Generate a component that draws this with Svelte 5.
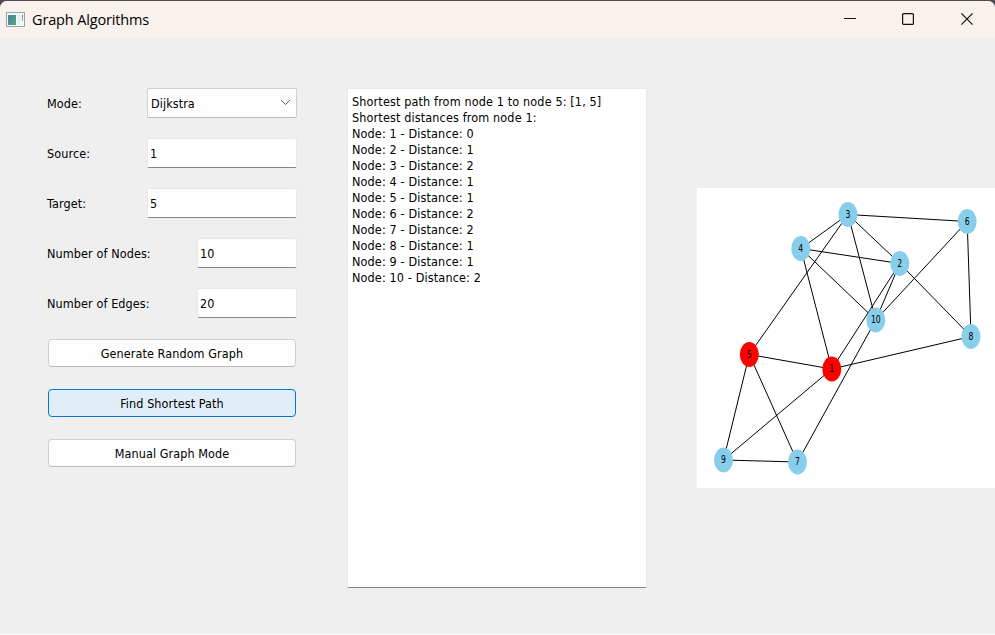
<script>
  let mode = $state('Dijkstra');
  let source = $state('1');
  let target = $state('5');
  let nodeCount = $state('10');
  let edgeCount = $state('20');

  const distances = [0, 1, 2, 1, 1, 2, 2, 1, 1, 2];
  const output = [
    'Shortest path from node 1 to node 5: [1, 5]',
    'Shortest distances from node 1:',
    ...distances.map((d, i) => `Node: ${i + 1} - Distance: ${d}`)
  ];

  const nodes = {
    1: [134.8, 181],
    2: [202.8, 75.5],
    3: [151, 26.5],
    4: [103.8, 60.5],
    5: [52.3, 166.5],
    6: [270.2, 33.5],
    7: [100.5, 274],
    8: [274, 148.5],
    9: [26.5, 272],
    10: [178.8, 132]
  };
  const edges = [
    [3, 4], [3, 6], [3, 2], [3, 10], [3, 5],
    [4, 2], [4, 10], [4, 1], [2, 10], [2, 1],
    [2, 8], [6, 10], [6, 8], [8, 1], [10, 7],
    [5, 1], [5, 9], [5, 7], [1, 9], [9, 7]
  ];
  const path = [1, 5];
</script>

<div class="desktop">
  <div class="window">
    <header>
      <svg class="app-icon" width="19" height="16" viewBox="0 0 19 16">
        <defs>
          <linearGradient id="pane" x1="0" y1="0" x2="1" y2="1">
            <stop offset="0" stop-color="#4581a4" />
            <stop offset="1" stop-color="#55a878" />
          </linearGradient>
          <linearGradient id="strip" x1="0" y1="0" x2="0" y2="1">
            <stop offset="0" stop-color="#4581a4" />
            <stop offset="1" stop-color="#7cc49a" />
          </linearGradient>
        </defs>
        <rect x="0.5" y="0.5" width="18" height="14" fill="#f5f7f8" stroke="#9aa3a8" />
        <rect x="2" y="3" width="8" height="10" fill="url(#pane)" />
        <rect x="11" y="3" width="4" height="10" fill="#e9eeee" />
        <rect x="16" y="3" width="1" height="6" fill="url(#strip)" />
      </svg>
      <h1>Graph Algorithms</h1>
      <div class="controls">
        <svg width="12" height="12" viewBox="0 0 12 12"><path d="M0 5.5H12" /></svg>
        <svg width="12" height="12" viewBox="0 0 12 12"><rect x="0.6" y="0.6" width="10.8" height="10.8" rx="1" /></svg>
        <svg width="12" height="12" viewBox="0 0 12 12"><path d="M0.4 0.4L11.6 11.6M11.6 0.4L0.4 11.6" /></svg>
      </div>
    </header>

    <main>
      <form>
        <div class="row">
          <label for="mode">Mode:</label>
          <button type="button" id="mode" class="combo">
            <span>{mode}</span>
            <svg width="11" height="7" viewBox="0 0 11 7"><path d="M1 1L5.5 5.5L10 1" /></svg>
          </button>
        </div>
        <div class="row">
          <label for="source">Source:</label>
          <input id="source" bind:value={source} />
        </div>
        <div class="row">
          <label for="target">Target:</label>
          <input id="target" bind:value={target} />
        </div>
        <div class="row">
          <label for="nodes">Number of Nodes:</label>
          <input id="nodes" class="short" bind:value={nodeCount} />
        </div>
        <div class="row">
          <label for="edges">Number of Edges:</label>
          <input id="edges" class="short" bind:value={edgeCount} />
        </div>
        <button type="button" class="push">Generate Random Graph</button>
        <button type="button" class="push hot">Find Shortest Path</button>
        <button type="button" class="push">Manual Graph Mode</button>
      </form>

      <section class="output">
        {#each output as line}
          <div><span>{line}</span></div>
        {/each}
      </section>

      <svg class="graph" width="298" height="300" viewBox="0 0 298 300">
        {#each edges as [a, b]}
          <line x1={nodes[a][0]} y1={nodes[a][1]} x2={nodes[b][0]} y2={nodes[b][1]} />
        {/each}
        {#each Object.entries(nodes) as [id, [x, y]]}
          <ellipse class:visited={path.includes(+id)} cx={x} cy={y} rx="9.5" ry="12.5" />
          <text transform="translate({x} {y + 3.2}) scale(0.76 1)">{id}</text>
        {/each}
      </svg>
    </main>
  </div>
</div>

<style>
  .desktop {
    width: 995px;
    height: 635px;
    box-sizing: border-box;
    padding: 1px 0;
    background: linear-gradient(#4c4b50 0 10px, #fff 10px);
    overflow: hidden;
    font-family: 'DejaVu Sans Condensed', 'DejaVu Sans', sans-serif;
    font-stretch: condensed;
    font-size: 12.5px;
    letter-spacing: 0.14px;
    color: #000;
  }
  .window {
    height: 633px;
    background: #efefef;
    border-radius: 7px 7px 0 0;
    overflow: hidden;
  }
  header {
    display: flex;
    align-items: center;
    height: 37px;
    padding-left: 6px;
    background: #f9f1ec;
  }
  h1 {
    flex: 1;
    margin: 0 0 0 7px;
    font: 400 14.5px/20px 'Open Sans', 'Noto Sans', sans-serif;
    letter-spacing: -0.15px;
  }
  .controls {
    display: flex;
    gap: 46px;
    padding: 0 22px 1px 0;
  }
  .controls svg {
    display: block;
    fill: none;
    stroke: #111;
    stroke-width: 1.2;
  }
  .controls svg:last-child {
    margin-left: 1px;
  }
  main {
    display: flex;
    align-items: flex-start;
    padding: 50px 0 0 47px;
  }
  form {
    display: flex;
    flex-direction: column;
    gap: 20px;
    width: 250px;
  }
  .row {
    display: flex;
    justify-content: space-between;
    align-items: center;
    height: 30px;
  }
  .row label {
    padding-top: 1px;
    letter-spacing: 0.1px;
  }
  .row input {
    box-sizing: border-box;
    width: 150px;
    height: 30px;
    margin: 0;
    padding: 0 2px;
    border: 1px solid #e8e8e8;
    border-bottom-color: #868686;
    border-radius: 2px;
    outline: 0;
    background: #fff;
    font: inherit;
    letter-spacing: inherit;
    color: inherit;
  }
  .row input.short {
    width: 100px;
  }
  button {
    font: inherit;
    letter-spacing: 0.08px;
    color: inherit;
  }
  .combo {
    display: flex;
    justify-content: space-between;
    align-items: center;
    box-sizing: border-box;
    width: 150px;
    height: 30px;
    padding: 1px 5px 0 3px;
    border: 1px solid #d0d0d0;
    border-bottom-color: #bababa;
    border-radius: 2px;
    background: #fdfdfd;
  }
  .combo svg {
    margin-bottom: 2px;
    fill: none;
    stroke: #5c5c5c;
  }
  .push {
    box-sizing: border-box;
    height: 28px;
    margin: 1px 1px;
    padding: 1px 0 0;
    border: 1px solid #d0d0d0;
    border-bottom-color: #bababa;
    border-radius: 4px;
    background: #fdfdfd;
  }
  .push.hot {
    border-color: #0078d4;
    background: #e0eef9;
  }
  .output {
    box-sizing: border-box;
    width: 300px;
    height: 500px;
    margin-left: 50px;
    padding: 5px 4px;
    border: 1px solid #e8e8e8;
    border-bottom-color: #868686;
    border-radius: 2px;
    background: #fff;
    line-height: 16px;
    white-space: pre;
  }
  .graph {
    display: block;
    margin: 100px 0 0 50px;
    background: #fff;
  }
  .graph line {
    stroke: #000;
    stroke-width: 1;
  }
  .graph ellipse {
    fill: #87ceeb;
  }
  .graph ellipse.visited {
    fill: #f00;
  }
  .graph text {
    font-size: 11.3px;
    letter-spacing: 0;
    text-anchor: middle;
  }
</style>
